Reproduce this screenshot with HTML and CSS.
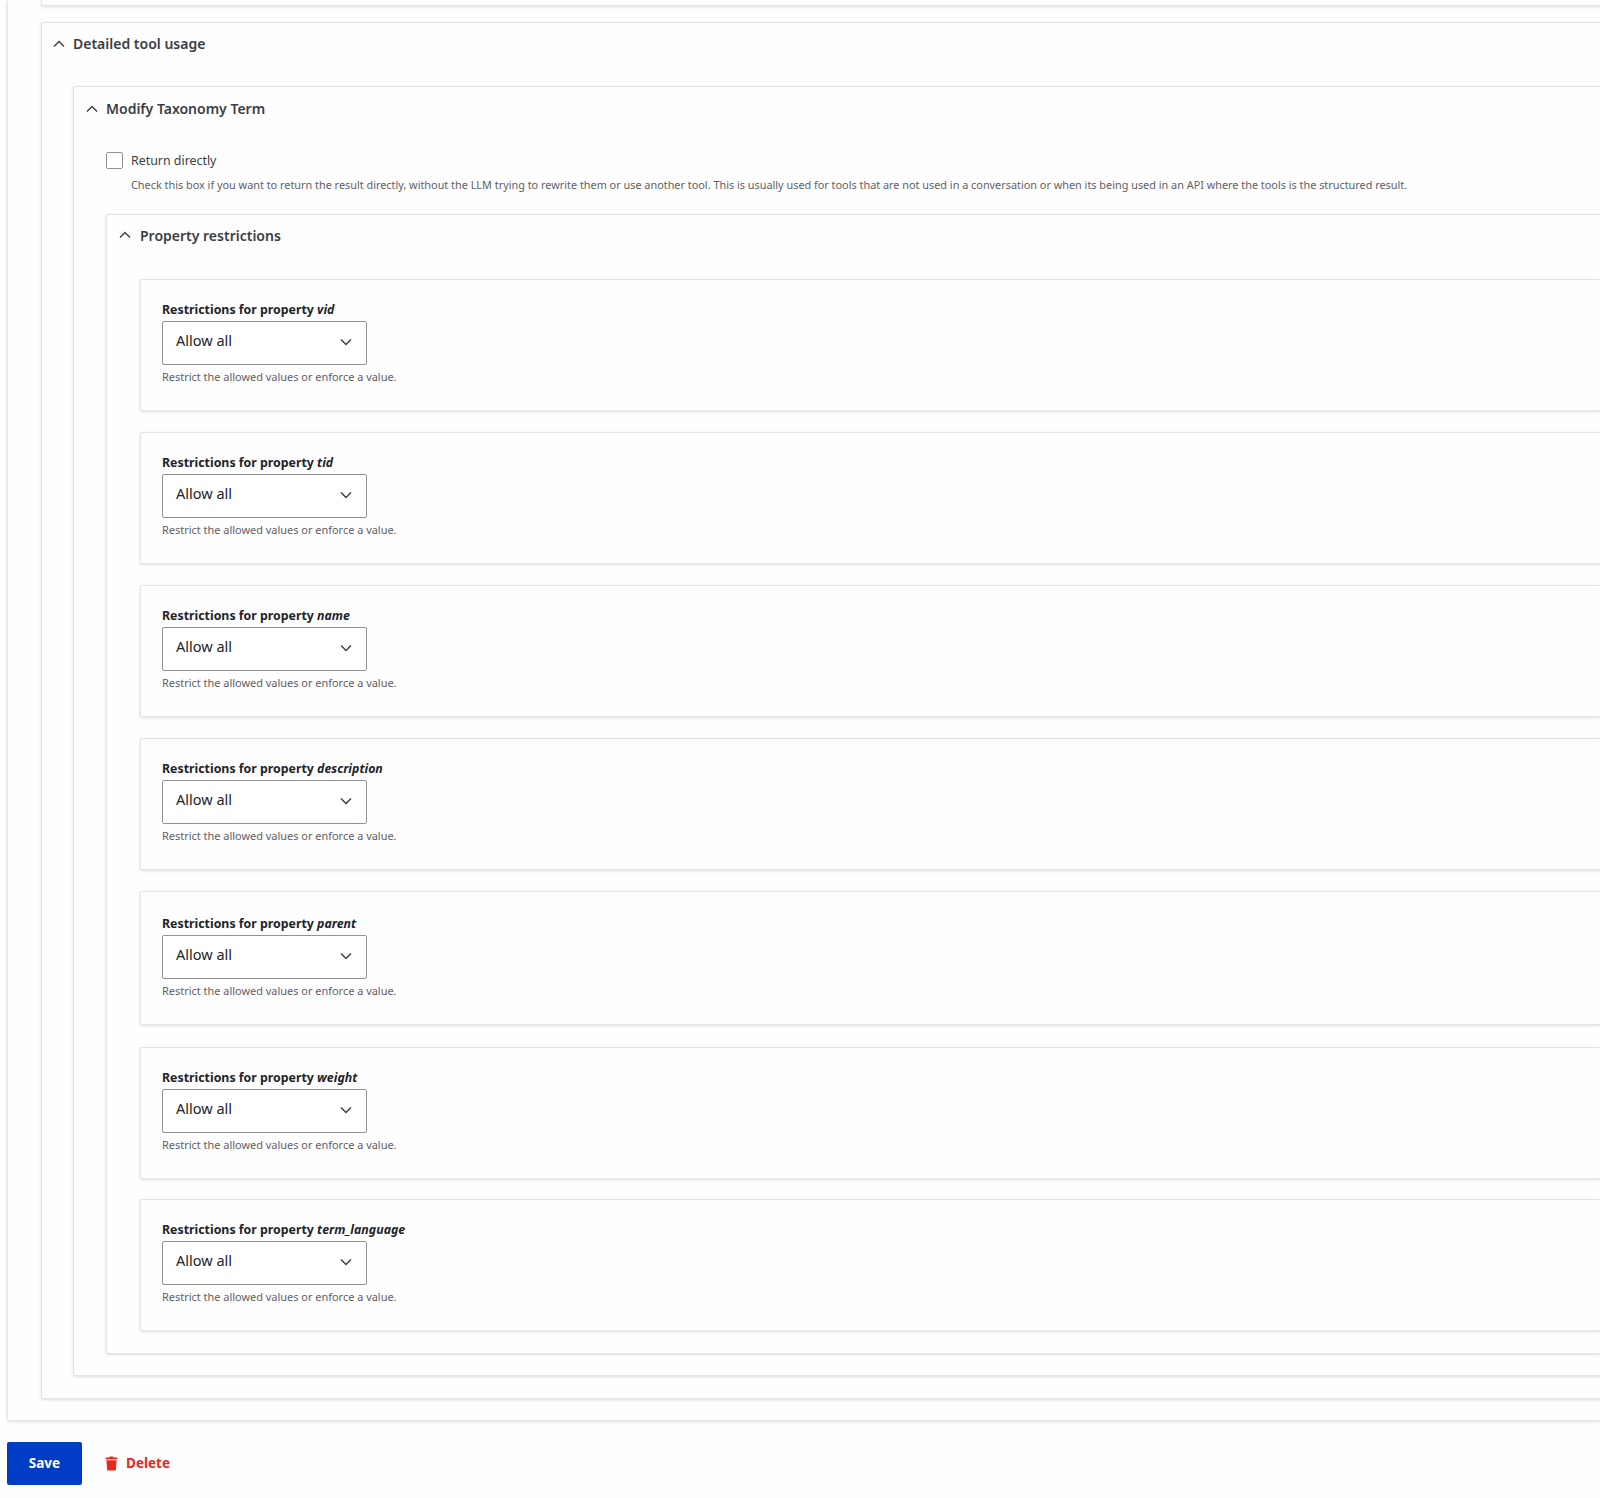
FILE: index.html
```html
<!DOCTYPE html>
<html lang="en">
<head>
    <meta charset="UTF-8">
    <meta name="viewport" content="width=device-width, initial-scale=1.0">
    <title>Modify Taxonomy Term</title>
    <link rel="stylesheet" href="styles.css">
</head>
<body>
    <div class="form-wrap">
        <div class="card outer">
            <div class="card prev"></div>

            <div class="card usage">
                <div class="summary">
                    <svg class="arrow" viewBox="0 0 12 8"><path d="M1 6.5 6 1.5l5 5"/></svg>
                    <span>Detailed tool usage</span>
                </div>

                <div class="card tool">
                    <div class="summary">
                        <svg class="arrow" viewBox="0 0 12 8"><path d="M1 6.5 6 1.5l5 5"/></svg>
                        <span>Modify Taxonomy Term</span>
                    </div>

                    <div class="check-row">
                        <span class="checkbox"></span>
                        <label>Return directly</label>
                    </div>
                    <p class="check-help">Check this box if you want to return the result directly, without the LLM trying to rewrite them or use another tool. This is usually used for tools that are not used in a conversation or when its being used in an API where the tools is the structured result.</p>

                    <div class="card restrictions">
                        <div class="summary">
                            <svg class="arrow" viewBox="0 0 12 8"><path d="M1 6.5 6 1.5l5 5"/></svg>
                            <span>Property restrictions</span>
                        </div>

                        <div class="card prop">
                            <div class="prop-label">Restrictions for property <em>vid</em></div>
                            <div class="select"><span>Allow all</span><svg viewBox="0 0 12 8"><path d="M1 1.5 6 6.5l5-5"/></svg></div>
                            <div class="help">Restrict the allowed values or enforce a value.</div>
                        </div>
                        <div class="card prop">
                            <div class="prop-label">Restrictions for property <em>tid</em></div>
                            <div class="select"><span>Allow all</span><svg viewBox="0 0 12 8"><path d="M1 1.5 6 6.5l5-5"/></svg></div>
                            <div class="help">Restrict the allowed values or enforce a value.</div>
                        </div>
                        <div class="card prop">
                            <div class="prop-label">Restrictions for property <em>name</em></div>
                            <div class="select"><span>Allow all</span><svg viewBox="0 0 12 8"><path d="M1 1.5 6 6.5l5-5"/></svg></div>
                            <div class="help">Restrict the allowed values or enforce a value.</div>
                        </div>
                        <div class="card prop">
                            <div class="prop-label">Restrictions for property <em>description</em></div>
                            <div class="select"><span>Allow all</span><svg viewBox="0 0 12 8"><path d="M1 1.5 6 6.5l5-5"/></svg></div>
                            <div class="help">Restrict the allowed values or enforce a value.</div>
                        </div>
                        <div class="card prop tall">
                            <div class="prop-label">Restrictions for property <em>parent</em></div>
                            <div class="select"><span>Allow all</span><svg viewBox="0 0 12 8"><path d="M1 1.5 6 6.5l5-5"/></svg></div>
                            <div class="help">Restrict the allowed values or enforce a value.</div>
                        </div>
                        <div class="card prop">
                            <div class="prop-label">Restrictions for property <em>weight</em></div>
                            <div class="select"><span>Allow all</span><svg viewBox="0 0 12 8"><path d="M1 1.5 6 6.5l5-5"/></svg></div>
                            <div class="help">Restrict the allowed values or enforce a value.</div>
                        </div>
                        <div class="card prop">
                            <div class="prop-label">Restrictions for property <em>term_language</em></div>
                            <div class="select"><span>Allow all</span><svg viewBox="0 0 12 8"><path d="M1 1.5 6 6.5l5-5"/></svg></div>
                            <div class="help">Restrict the allowed values or enforce a value.</div>
                        </div>
                    </div>
                </div>
            </div>
        </div>

        <div class="actions">
            <button class="save-button">Save</button>
            <a class="delete-link" href="#">
                <svg viewBox="0 0 14 16"><path d="M4.6 1.6 5.3.4h3.4l.7 1.2H13.4v1.8H.6V1.6zM1.5 4.5h11l-.8 10.2c0 .5-.5.9-1 .9H3.3c-.5 0-1-.4-1-.9z"/></svg>
                <span>Delete</span>
            </a>
        </div>
    </div>
</body>
</html>
```

FILE: styles.css
```css
body {
    font-family: 'Noto Sans', sans-serif;
    background-color: #fefefe;
    color: #232429;
    margin: 0;
    padding: 0;
    height: 1498px;
    overflow: hidden;
}

.form-wrap {
    padding-left: 7px;
}

.card {
    background: #fefefe;
    border: 1px solid #e4e3e9;
    border-right: none;
    box-shadow: 0 1px 3px rgba(35, 30, 60, 0.14);
    border-radius: 2px 0 0 2px;
}

.outer {
    border-top: none;
    padding: 0 0 21px 33px;
    height: 1421px;
    box-sizing: border-box;
}

.prev {
    height: 6px;
    box-sizing: border-box;
    border-top: none;
    margin-bottom: 16px;
}

.usage {
    height: 1377px;
    box-sizing: border-box;
    padding-left: 31px;
}

.tool {
    height: 1290px;
    box-sizing: border-box;
    padding-left: 32px;
}

.restrictions {
    height: 1140px;
    box-sizing: border-box;
    padding-left: 33px;
    margin-top: 21px;
}

.summary {
    display: flex;
    align-items: center;
    gap: 8px;
    margin-left: -20px;
    height: 41px;
    font-size: 14px;
    font-weight: 600;
    color: #3c3d44;
}

.usage > .summary {
    margin-bottom: 22px;
}

.tool > .summary {
    height: 43px;
    margin-bottom: 22px;
}

.restrictions > .summary {
    height: 40px;
    gap: 9px;
    margin-left: -21px;
    margin-bottom: 24px;
}

.arrow {
    width: 12px;
    height: 8px;
    flex: none;
}

.arrow path,
.select path {
    fill: none;
    stroke: #3c3d44;
    stroke-width: 1.4;
}

.check-row {
    display: flex;
    align-items: center;
    gap: 8px;
    height: 16px;
    font-size: 12.4px;
    color: #3c3d44;
}

.checkbox {
    width: 15px;
    height: 15px;
    border: 1px solid #8e929c;
    border-radius: 2px;
    background: #fff;
    flex: none;
}

.check-help {
    margin: 9px 0 0 25px;
    font-size: 10.87px;
    line-height: 16px;
    color: #5f6066;
}

.prop {
    height: 132px;
    box-sizing: border-box;
    padding: 21px 0 0 21px;
    margin-bottom: 21px;
}

.prop.tall {
    height: 134px;
    padding-top: 23px;
    margin-bottom: 22px;
}

.prop.tall + .prop {
    margin-bottom: 20px;
}

.prop-label {
    font-size: 12.35px;
    font-weight: 700;
    line-height: 18px;
    color: #232429;
    margin-bottom: 2px;
}

.select {
    display: flex;
    align-items: center;
    justify-content: space-between;
    box-sizing: border-box;
    width: 205px;
    height: 44px;
    padding: 0 14px 7px 13px;
    border: 1px solid #8e929c;
    border-radius: 2px;
    background: #fff;
    font-size: 14.5px;
    color: #232429;
}

.select svg {
    width: 12px;
    height: 8px;
    margin-top: 5px;
}

.help {
    margin-top: 4px;
    font-size: 10.95px;
    line-height: 16px;
    color: #5f6066;
}

.actions {
    display: flex;
    align-items: center;
    gap: 23px;
    margin-top: 21px;
}

.save-button {
    width: 75px;
    height: 43px;
    padding-bottom: 2px;
    border: none;
    border-radius: 2px;
    background-color: #003cc5;
    color: #fff;
    font-family: inherit;
    font-size: 13.5px;
    font-weight: 700;
}

.delete-link {
    display: flex;
    align-items: center;
    gap: 8px;
    color: #e6291e;
    font-size: 13.5px;
    font-weight: 700;
    text-decoration: none;
}

.delete-link span {
    margin-top: -2px;
}

.delete-link svg {
    width: 13px;
    height: 15px;
    fill: #e6291e;
}
```
